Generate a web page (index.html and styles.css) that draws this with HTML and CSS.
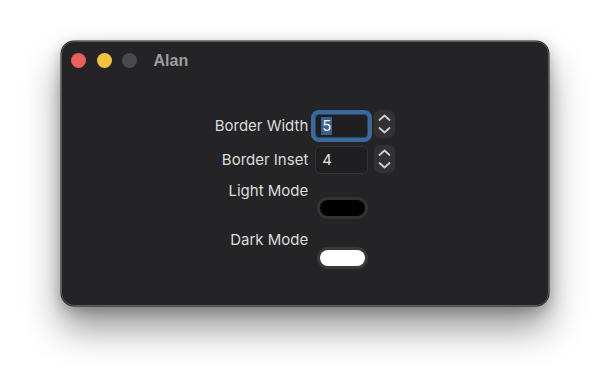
FILE: index.html
```html
<!DOCTYPE html>
<html>
<head>
<meta charset="utf-8">
<link rel="stylesheet" href="styles.css">
</head>
<body>
<div class="window">
  <div class="titlebar">
    <span class="light red"></span>
    <span class="light yellow"></span>
    <span class="light gray"></span>
    <span class="title">Alan</span>
  </div>
  <div class="content">
    <div class="form">
      <div class="label r1">Border Width</div>
      <div class="field focused r1"><span class="sel">5</span></div>
      <div class="stepper s1">
        <svg width="21" height="28" viewBox="0 0 21 28"><path d="M5.5 10 L10.5 5.5 L15.5 10" /><path d="M5.5 18 L10.5 22.5 L15.5 18" /></svg>
      </div>

      <div class="label r2">Border Inset</div>
      <div class="field r2"><span class="val">4</span></div>
      <div class="stepper s2">
        <svg width="21" height="28" viewBox="0 0 21 28"><path d="M5.5 10 L10.5 5.5 L15.5 10" /><path d="M5.5 18 L10.5 22.5 L15.5 18" /></svg>
      </div>

      <div class="label r3">Light Mode</div>
      <div class="well w3"><span class="swatch black"></span></div>
      <div class="empty"></div>

      <div class="label r4">Dark Mode</div>
      <div class="well w4"><span class="swatch white"></span></div>
      <div class="empty"></div>
    </div>
  </div>
</div>
</body>
</html>
```

FILE: styles.css
```css
html, body {
  margin: 0;
  padding: 0;
  background: #ffffff;
}
body {
  width: 610px;
  height: 387px;
  overflow: hidden;
  padding: 41px 0 0 61px;
  box-sizing: border-box;
}
.window {
  width: 488px;
  height: 265px;
  box-sizing: border-box;
  background: #242426;
  border: 1px solid #5a5a5c;
  border-radius: 13px;
  box-shadow: 0 0 0 0.5px #1a1a1a, 0 22px 36px rgba(0,0,0,0.42), 0 4px 14px rgba(0,0,0,0.25);
  font-family: Inter, "Liberation Sans", sans-serif;
}
.titlebar {
  height: 37px;
  display: flex;
  align-items: center;
  padding-left: 9px;
  box-sizing: border-box;
}
.light {
  width: 15px;
  height: 15px;
  border-radius: 50%;
  margin-right: 10.5px;
  display: block;
}
.red { background: #ec5f5a; }
.yellow { background: #f3c23e; }
.gray { background: #4a4a4d; }
.title {
  margin-left: 6px;
  font-family: "Liberation Sans", Arial, sans-serif;
  font-weight: bold;
  font-size: 16px;
  color: #9d9d9f;
}
.content {
  display: flex;
  justify-content: center;
  padding-top: 30px;
}
.form {
  display: grid;
  grid-template-columns: auto 53px 21px;
  grid-template-rows: 36px 37px 49px 38px;
  column-gap: 6px;
}
.label {
  font-size: 15px;
  line-height: 18px;
  color: #dcdcdc;
  text-align: right;
  align-self: start;
  padding-right: 1px;
}
.label.r1 { margin-top: 8px; }
.label.r2 { margin-top: 6px; }
.label.r3 { margin-top: 0; }
.label.r4 { margin-top: 0; }
.field {
  align-self: start;
  box-sizing: border-box;
  background: #1f1f21;
  border: 1px solid #343436;
  border-radius: 5px;
  font-size: 15px;
  color: #e2e2e2;
  display: flex;
  align-items: center;
  padding-left: 6px;
}
.field.r1 {
  margin-top: 5px;
  height: 24px;
  border-color: #24476a;
  box-shadow: 0 0 0 4px #3a6b9a;
  border-radius: 4px;
}
.field.r2 {
  margin-top: 1px;
  height: 28px;
}
.sel {
  background: #3d5f8c;
  color: #f2f2f2;
  padding: 0 1px;
  line-height: 18px;
  margin-left: -1px;
}
.val { line-height: 18px; }
.stepper {
  align-self: start;
  width: 21px;
  height: 28px;
  background: #323234;
  border-radius: 6px;
}
.stepper svg { display: block; }
.stepper path {
  fill: none;
  stroke: #cfcfd1;
  stroke-width: 1.8;
  stroke-linecap: round;
  stroke-linejoin: round;
}
.s1 { margin-top: 1px; }
.s2 { margin-top: 0; }
.well {
  align-self: start;
  margin-left: 2px;
  width: 51px;
  height: 22px;
  box-sizing: border-box;
  border-radius: 11px;
  background: #333335;
  padding: 3px;
  display: flex;
}
.w3 { margin-top: 15px; }
.w4 { margin-top: 16px; background: #3a3a3c; }
.swatch {
  flex: 1;
  border-radius: 8px;
  display: block;
}
.black { background: #000000; }
.white { background: #ffffff; }
```
